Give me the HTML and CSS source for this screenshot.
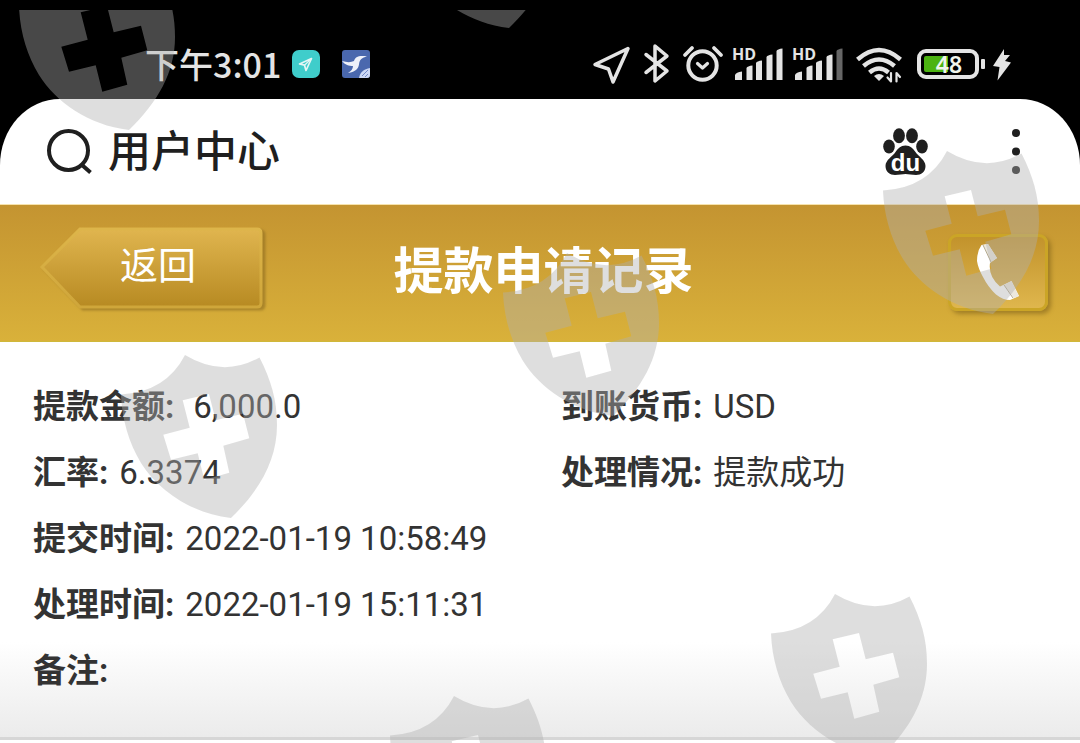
FILE: index.html
```html
<!DOCTYPE html>
<html lang="zh-CN">
<head>
<meta charset="utf-8">
<meta name="viewport" content="width=device-width, initial-scale=1">
<title>用户中心</title>
<link rel="stylesheet" href="styles.css">
</head>
<body>
<div class="status-bar">
  <div class="status-left">
    <span class="clock">下午3:01</span>
    <svg class="app-icon" width="28" height="28" viewBox="0 0 28 28" aria-hidden="true">
      <rect width="28" height="28" rx="7" fill="#3fcdcb"/>
      <path d="M19.500 8.500L7.500 14l5 1.200L14 20.500z" fill="none" stroke="#e4f6f5" stroke-width="1.700" stroke-linejoin="round"/>
      <path d="M19.500 8.500l-7 6.700" stroke="#e4f6f5" stroke-width="1.200"/>
    </svg>
    <svg class="app-icon app-icon-bird" width="28" height="28" viewBox="0 0 28 28" aria-hidden="true">
      <rect width="28" height="28" rx="3" fill="#4a68ae"/>
      <path d="M0 11c5 1.500 9 1.500 12 0 1-4 5-6 13-4.500-5 1-7.500 3-8 8C16.500 18 14 22 6 23c3-2 5-4 5-7-4 0-8-1-11-5z" fill="#eef1fa"/>
      <path d="M28 18v7a3 3 0 0 1-3 3h-8c1-6 5-9 11-10z" fill="#ccd8f5"/>
      <path d="M20 26l6-6M23 27l3-3" stroke="#7289c8" stroke-width="1"/>
    </svg>
  </div>
  <div class="status-right">
    <svg width="390" height="42" viewBox="590 43 390 42" fill="none" stroke="#e4e4e4" stroke-width="3.500" stroke-linejoin="round" stroke-linecap="round" role="img" aria-label="手机状态">
      <path d="M628 48.500L595 64.500l13.500 4.500L613 82z"/>
      <path d="M646 54.500L667 71l-12 10V46l12 10-21 16.500"/>
      <circle cx="702.500" cy="65.500" r="14.200" stroke-width="4"/>
      <path d="M697.500 63.500l5 4.500 5-4.500" stroke-width="3.200"/>
      <path d="M685 55l7-7M721 55l-7-7" stroke-width="3.800"/>
      <g fill="#e4e4e4" stroke="none">
        <text class="hd" x="732" y="60">HD</text>
        <path d="M735 80v-5q1-3 7-3.500V80zM746.500 80V68q1-2 6-2.500V80z"/>
        <path d="M756 80V63q1-2 6-2.500V80zM766.500 80V57q1-2 6-2.500V80zM776.500 80V51q1-2 6-2.500V80z"/>
        <text class="hd" x="792" y="60">HD</text>
        <path d="M795 80v-5q1-3 7-3.500V80zM806.500 80V68q1-2 6-2.500V80z"/>
        <path d="M816 80V63q1-2 6-2.500V80zM826.500 80V57q1-2 6-2.500V80z"/>
        <path d="M836.500 80V51q1-2 6-2.500V80z" fill="#666"/>
      </g>
      <g stroke-width="4.500" stroke-linecap="butt">
        <path d="M857.500 59.500q21.500-19 43 0"/>
        <path d="M863.500 66q15.500-13 31 0"/>
        <path d="M869.500 72.500q9.500-8 19 0"/>
      </g>
      <path d="M874 76q5-4 10 0l-5 5z" fill="#e4e4e4" stroke="none"/>
      <path d="M891 73v8.500l-3.500-4M896.500 81.500V73l3.500 4" stroke-width="2.200"/>
      <rect x="919" y="51" width="58" height="26" rx="7" stroke-width="4"/>
      <path d="M926 56h22v16h-22q-2 0-2-2V58q0-2 2-2z" fill="#4cb312" stroke="none"/>
      <text class="battery" x="949" y="73" text-anchor="middle" fill="#f0f5ec" stroke="none">48</text>
    </svg>
    <svg width="32" height="42" viewBox="980 43 32 42" aria-hidden="true">
      <rect x="981" y="59" width="4" height="10" rx="1" fill="#e4e4e4"/>
      <path d="M1004 49l-11 17 6.500 1-2 13.500L1011 62.500l-6-1.500 5-6h-6z" fill="#e4e4e4"/>
    </svg>
  </div>
</div>

<div class="browser-wrap">
  <header class="browser-bar">
    <div class="page-name">
      <svg width="46" height="46" viewBox="0 0 46 46" fill="none" stroke="#1f1f1f" stroke-width="4" aria-hidden="true">
        <circle cx="21.500" cy="21.500" r="19.500"/>
        <path d="M35 36l8.500 7.500"/>
      </svg>
      <span class="page-text">用户中心</span>
    </div>
    <div class="browser-actions">
      <button class="icon-button" type="button" aria-label="百度">
        <svg width="46" height="48" viewBox="0 0 46 48" fill="#1f1f1f">
          <ellipse cx="16" cy="7.800" rx="5.900" ry="7.500"/>
          <ellipse cx="29" cy="7.800" rx="5.900" ry="7.500"/>
          <ellipse cx="6" cy="18.500" rx="5.800" ry="7"/>
          <ellipse cx="39" cy="18.500" rx="5.800" ry="7"/>
          <path d="M22.500 17.500c5 0 7.500 3 10 6.500 3 4.500 10 8 10 14 0 6-4.500 9-9.500 9-4 0-7.500-1-10.500-1s-6.500 1-10.500 1c-5 0-9.500-3-9.500-9 0-6 7-9.500 10-14 2.500-3.500 5-6.500 10-6.500z"/>
          <text class="du" x="22.500" y="43" text-anchor="middle" fill="#fff">du</text>
        </svg>
      </button>
      <button class="icon-button" type="button" aria-label="更多">
        <svg width="10" height="48" viewBox="0 0 10 48" fill="#1f1f1f">
          <circle cx="5" cy="5" r="4"/><circle cx="5" cy="23.500" r="4"/><circle cx="5" cy="42" r="4"/>
        </svg>
      </button>
    </div>
  </header>
</div>

<div class="title-bar">
  <button class="back-button" type="button">
    <svg class="back-shape" width="232" height="92" viewBox="0 0 232 92" aria-hidden="true">
      <defs>
        <linearGradient id="gold" x1="0" y1="0" x2="0" y2="1">
          <stop offset="0" stop-color="#e0b54f"/><stop offset="1" stop-color="#b78a22"/>
        </linearGradient>
        <linearGradient id="edge" x1="0" y1="0" x2="0" y2="1">
          <stop offset="0" stop-color="#ddb54a"/><stop offset="1" stop-color="#cfa63a"/>
        </linearGradient>
      </defs>
      <path class="back-face" d="M3 42L41 4h177q4 0 4 4v70q0 4-4 4H41z" fill="url(#gold)" stroke="url(#edge)" stroke-width="3"/>
    </svg>
    <span class="back-label">返回</span>
  </button>
  <h1>提款申请记录</h1>
  <button class="phone-button" type="button" aria-label="电话">
    <svg width="46" height="60" viewBox="0 -1 46 60">
      <path d="M6.500 1L13 0 22 14 15 19Q13 32 25 42.500L36.500 37 44 52 35 56Q28 56 21 50.500 13 43 8 33 3 24 2 17 2 7 6.500 1z" fill="#fff"/>
      <path d="M8 1l5-1 9 14-6 4zM29 41l7.500-4L44 52l-5 2z" fill="#ece8dd"/>
      <path d="M8 1l8 17M29 41l9 13" stroke="#b3a98f" stroke-width="1"/>
    </svg>
  </button>
</div>

<main class="record">
  <dl class="fields">
    <div class="field"><dt>提款金额:</dt><dd class="amount">6,000.0</dd></div>
    <div class="field"><dt>到账货币:</dt><dd>USD</dd></div>
    <div class="field"><dt>汇率:</dt><dd>6.3374</dd></div>
    <div class="field"><dt>处理情况:</dt><dd>提款成功</dd></div>
    <div class="field wide"><dt>提交时间:</dt><dd>2022-01-19 10:58:49</dd></div>
    <div class="field wide"><dt>处理时间:</dt><dd>2022-01-19 15:11:31</dd></div>
    <div class="field wide"><dt>备注:</dt><dd></dd></div>
  </dl>
</main>

<svg class="watermark" aria-hidden="true">
  <defs>
    <path id="shield" fill-rule="evenodd" d="M0 0Q38 23 74.500 2.500C86 25 92 45 92 70C92 105 75 135 46 163C5 158-27 135-44 108C-56 88-63 65-64 39.500Q-19 37 0 0zM-2.300 45.300L24 39l6.700 26.300L58 58.700l6.300 24.600-26 7.400 6 27-25 7-6.600-26.400L-14 104.700l-7.700-25 26.400-7z"/>
    <clipPath id="below-edge"><rect y="10" width="100%" height="100%"/></clipPath>
  </defs>
  <g clip-path="url(#below-edge)">
    <use href="#shield" x="83" y="-33"/>
    <use href="#shield" x="463" y="-135"/>
    <use href="#shield" x="947" y="151"/>
    <use href="#shield" x="185" y="355"/>
    <use href="#shield" x="567" y="253"/>
    <use href="#shield" x="835" y="594"/>
    <use href="#shield" x="454" y="696"/>
  </g>
</svg>
</body>
</html>
```
FILE: styles.css
```css
* {
  box-sizing: border-box;
}

body {
  position: relative;
  margin: 0;
  min-height: 100vh;
  overflow: hidden;
  background: #fff;
  color: #333;
  font-family: Roboto, "Noto Sans CJK SC", sans-serif;
}

button {
  padding: 0;
  border: 0;
  background: none;
  font: inherit;
}

svg {
  display: block;
  flex: none;
}

.status-bar {
  display: flex;
  justify-content: space-between;
  height: 99px;
  padding: 43px 68px 0 145px;
  background: #000;
  color: #e4e4e4;
}

.status-left,
.status-right {
  display: flex;
  align-items: center;
  height: 42px;
}

.clock {
  font: 500 34px/42px "Noto Sans CJK SC", sans-serif;
}

.app-icon {
  margin-left: 11px;
}

.app-icon-bird {
  margin-left: 22px;
}

.hd {
  font: 700 16px "Open Sans", sans-serif;
}

.battery {
  font: 600 23px "Noto Sans", sans-serif;
}

.browser-wrap {
  background: #000;
}

.browser-bar {
  display: flex;
  align-items: center;
  justify-content: space-between;
  height: 106px;
  padding: 0 59px 0 47px;
  border-bottom: 1px solid #f6e3ad;
  border-radius: 60px 60px 0 0 / 66px 66px 0 0;
  background: #fff;
  color: #1f1f1f;
}

.page-name {
  display: flex;
  align-items: center;
  gap: 15px;
}

.page-text {
  padding-bottom: 8px;
  font: 500 43px/64px "Noto Sans CJK SC", sans-serif;
}

.browser-actions {
  display: flex;
  align-items: center;
  gap: 82px;
}

.du {
  font: 700 24px "Liberation Sans", sans-serif;
}

.title-bar {
  display: grid;
  grid-template-columns: 1fr auto 1fr;
  align-items: start;
  height: 137px;
  padding: 20px 32px 0 39px;
  border-bottom: 1px solid #cfb83a;
  background: linear-gradient(#c49431, #d9b13a);
}

.title-bar h1 {
  margin: 0;
  color: #fff;
  font: 700 50px/84px "Noto Sans CJK SC", sans-serif;
}

.back-button {
  display: grid;
  justify-self: start;
}

.back-shape,
.back-label {
  grid-area: 1 / 1;
}

.back-face {
  filter: drop-shadow(3px 2px 1px #8d6c1f99);
}

.back-label {
  padding-left: 6px;
  color: #fff;
  font: 400 38px/76px "Noto Sans CJK SC", sans-serif;
}

.phone-button {
  display: grid;
  place-items: center;
  justify-self: end;
  width: 100px;
  height: 77px;
  margin-top: 9px;
  border: 3px solid #cba526;
  border-radius: 9px;
  background: linear-gradient(#c2932c, #dfb64d);
  box-shadow: 3px 3px 4px #8d6c1fb0;
}

.record {
  height: 398px;
  padding: 32px 33px 0;
  border-bottom: 3px solid #d6d6d6;
  background: linear-gradient(#fff 300px, #ebebeb);
}

.fields {
  display: grid;
  grid-template-columns: 1fr 1fr;
  column-gap: 42px;
  margin: 0;
  font-size: 33px;
  line-height: 66px;
}

.field {
  display: flex;
  gap: 11px;
}

.wide {
  grid-column: 1 / -1;
}

dt {
  font-weight: 700;
}

dd {
  margin: 0;
}

.amount {
  padding-left: 8px;
}

.watermark {
  position: absolute;
  inset: 0;
  width: 100%;
  height: 100%;
  fill: #b0b0b0;
  opacity: 0.41;
  pointer-events: none;
}
```
